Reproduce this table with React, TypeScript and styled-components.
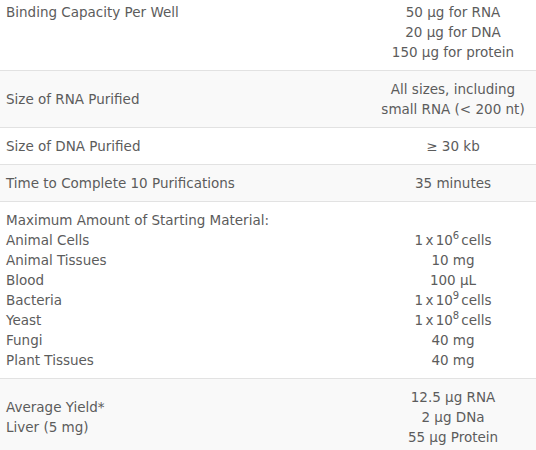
import React from "react";
import styled, { createGlobalStyle } from "styled-components";

const Global = createGlobalStyle`
  html, body { margin: 0; padding: 0; background: #fff; }
  body { font-family: "DejaVu Sans", "Open Sans", sans-serif; }
`;

const Table = styled.table`
  width: 536px;
  margin-top: -7px;
  border-collapse: collapse;
  font-size: 13.5px;
  line-height: 20px;
  color: #5c5c5c;
`;

const Row = styled.tr<{ $shade?: boolean }>`
  background: ${(p) => (p.$shade ? "#f9f9f9" : "#fff")};
  border-top: 1px solid #e2e2e2;
`;

const Label = styled.td<{ $top?: boolean }>`
  padding: 8px 6px;
  vertical-align: ${(p) => (p.$top ? "top" : "middle")};
  text-align: left;
  width: 358px;
`;

const Value = styled.td`
  padding: 8px 6px;
  vertical-align: middle;
  text-align: center;
`;

const Cells = styled.span`
  word-spacing: -2px;
`;

const Sup = styled.sup`
  font-size: 10px;
  line-height: 0;
  vertical-align: 6px;
  margin-right: 2px;
`;

const Lines = ({ items }: { items: React.ReactNode[] }) => (
  <>
    {items.map((it, i) => (
      <div key={i}>{it}</div>
    ))}
  </>
);

const cells = (exp: number) => (
  <Cells>
    1 x 10<Sup>{exp}</Sup>cells
  </Cells>
);

export default function App() {
  return (
    <>
      <Global />
      <Table>
        <tbody>
          <Row>
            <Label $top>Binding Capacity Per Well</Label>
            <Value>
              <Lines items={["50 µg for RNA", "20 µg for DNA", "150 µg for protein"]} />
            </Value>
          </Row>
          <Row $shade>
            <Label>Size of RNA Purified</Label>
            <Value>
              <Lines items={["All sizes, including", "small RNA (< 200 nt)"]} />
            </Value>
          </Row>
          <Row>
            <Label>Size of DNA Purified</Label>
            <Value>≥ 30 kb</Value>
          </Row>
          <Row $shade>
            <Label>Time to Complete 10 Purifications</Label>
            <Value>35 minutes</Value>
          </Row>
          <Row>
            <Label>
              <Lines
                items={[
                  "Maximum Amount of Starting Material:",
                  "Animal Cells",
                  "Animal Tissues",
                  "Blood",
                  "Bacteria",
                  "Yeast",
                  "Fungi",
                  "Plant Tissues",
                ]}
              />
            </Label>
            <Value>
              <Lines
                items={[
                  "\u00a0",
                  cells(6),
                  "10 mg",
                  "100 µL",
                  cells(9),
                  cells(8),
                  "40 mg",
                  "40 mg",
                ]}
              />
            </Value>
          </Row>
          <Row $shade>
            <Label>
              <Lines items={["Average Yield*", "Liver (5 mg)"]} />
            </Label>
            <Value>
              <Lines items={["12.5 µg RNA", "2 µg DNa", "55 µg Protein"]} />
            </Value>
          </Row>
        </tbody>
      </Table>
    </>
  );
}
